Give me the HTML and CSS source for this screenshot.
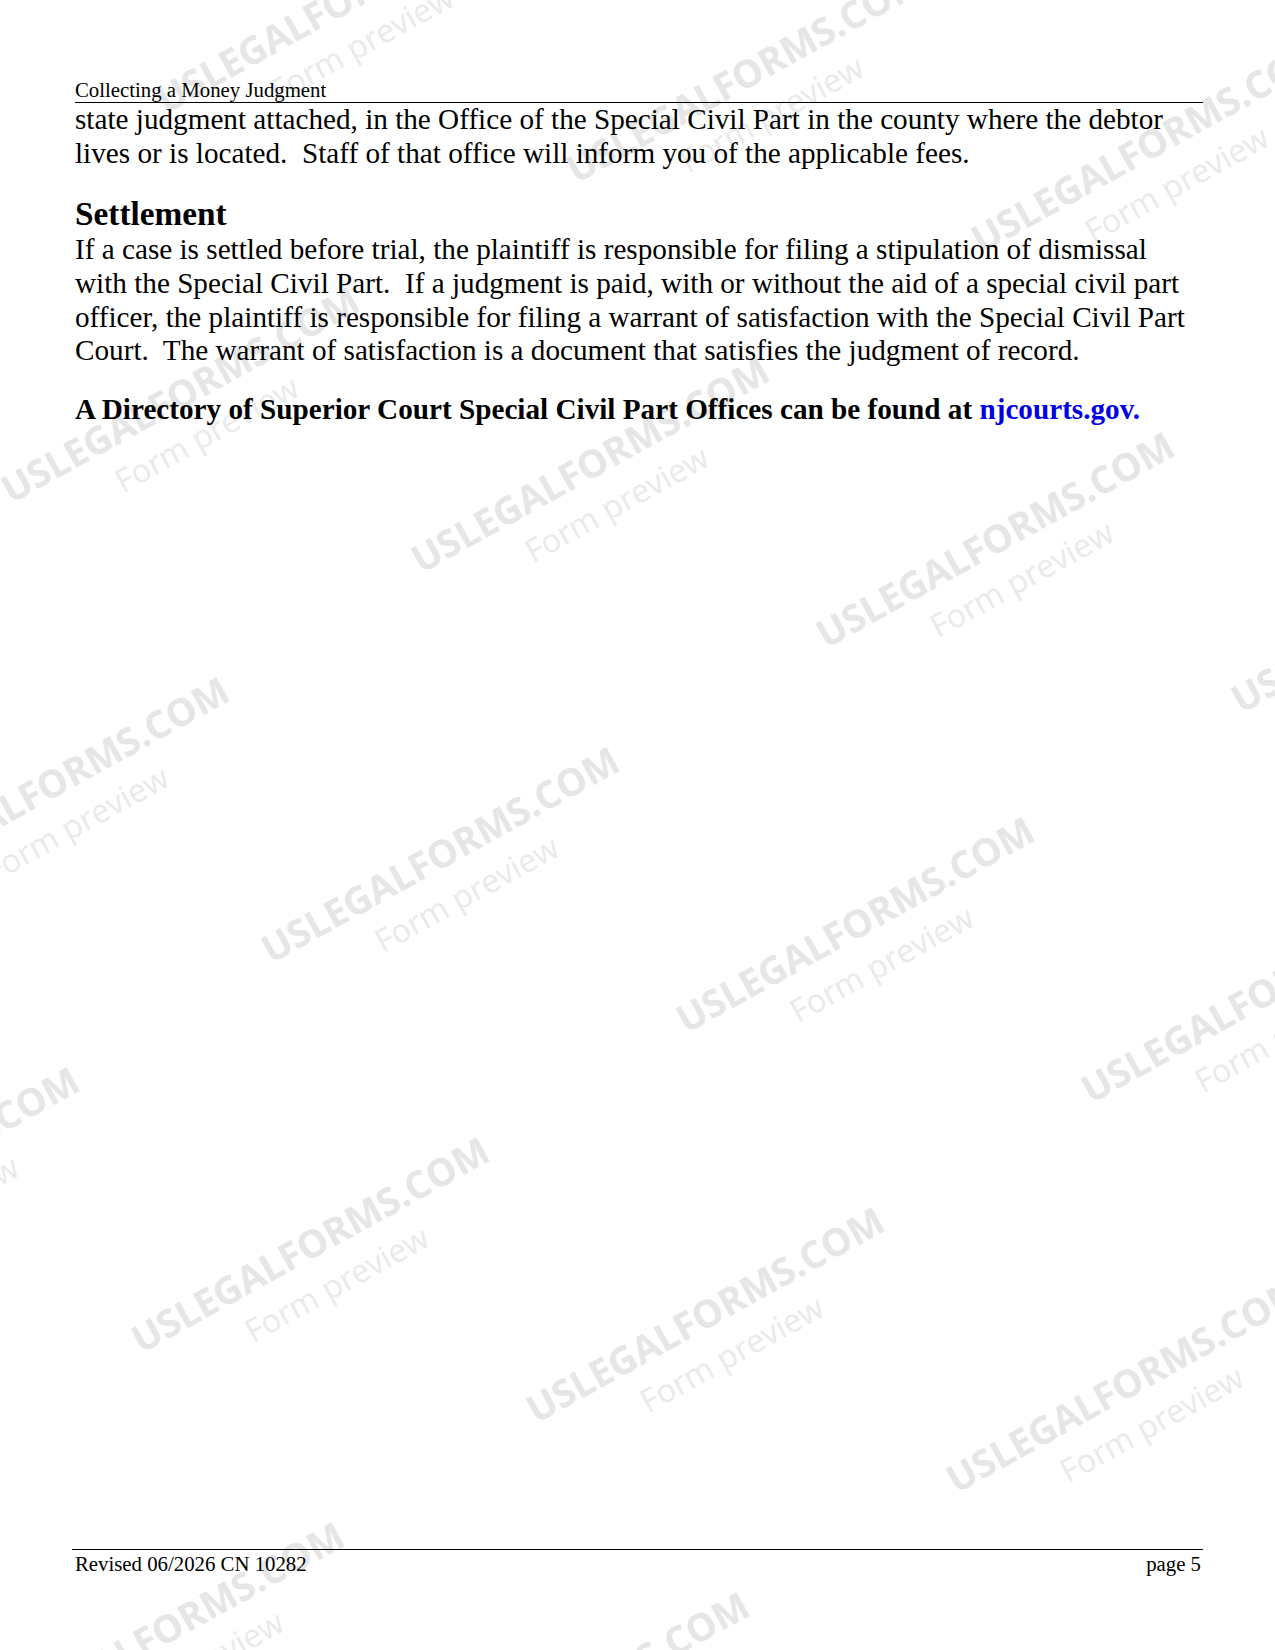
FILE: index.html
```html
<!DOCTYPE html>
<html lang="en">

<head>
    <meta charset="utf-8">
    <meta name="viewport" content="width=device-width, initial-scale=1.0">
    <title>Collecting a Money Judgment - page 5</title>
    <link rel="stylesheet" href="styles.css">
</head>

<body>
    <div class="page">

        <!-- preview watermark, sits behind the text -->
        <div class="watermarks" aria-hidden="true">
            <div class="wm a0"><span class="wm-main">USLEGALFORMS.COM</span><span class="wm-sub">Form preview</span></div>
            <div class="wm a1"><span class="wm-main">USLEGALFORMS.COM</span><span class="wm-sub">Form preview</span></div>
            <div class="wm a2"><span class="wm-main">USLEGALFORMS.COM</span><span class="wm-sub">Form preview</span></div>
            <div class="wm b0"><span class="wm-main">USLEGALFORMS.COM</span><span class="wm-sub">Form preview</span></div>
            <div class="wm b1"><span class="wm-main">USLEGALFORMS.COM</span><span class="wm-sub">Form preview</span></div>
            <div class="wm b2"><span class="wm-main">USLEGALFORMS.COM</span><span class="wm-sub">Form preview</span></div>
            <div class="wm b3"><span class="wm-main">USLEGALFORMS.COM</span><span class="wm-sub">Form preview</span></div>
            <div class="wm c0"><span class="wm-main">USLEGALFORMS.COM</span><span class="wm-sub">Form preview</span></div>
            <div class="wm c1"><span class="wm-main">USLEGALFORMS.COM</span><span class="wm-sub">Form preview</span></div>
            <div class="wm c2"><span class="wm-main">USLEGALFORMS.COM</span><span class="wm-sub">Form preview</span></div>
            <div class="wm c3"><span class="wm-main">USLEGALFORMS.COM</span><span class="wm-sub">Form preview</span></div>
            <div class="wm d0"><span class="wm-main">USLEGALFORMS.COM</span><span class="wm-sub">Form preview</span></div>
            <div class="wm d1"><span class="wm-main">USLEGALFORMS.COM</span><span class="wm-sub">Form preview</span></div>
            <div class="wm d2"><span class="wm-main">USLEGALFORMS.COM</span><span class="wm-sub">Form preview</span></div>
            <div class="wm d3"><span class="wm-main">USLEGALFORMS.COM</span><span class="wm-sub">Form preview</span></div>
            <div class="wm e1"><span class="wm-main">USLEGALFORMS.COM</span><span class="wm-sub">Form preview</span></div>
            <div class="wm e2"><span class="wm-main">USLEGALFORMS.COM</span><span class="wm-sub">Form preview</span></div>
        </div>

        <header class="kopf">Collecting a Money Judgment</header>

        <main class="tekst">
            <p class="afsnit">state judgment attached, in the Office of the Special Civil Part in the county where the debtor<br>lives or is located.&nbsp; Staff of that office will inform you of the applicable fees.</p>

            <h2 class="overskrift">Settlement</h2>
            <p class="afsnit">If a case is settled before trial, the plaintiff is responsible for filing a stipulation of dismissal<br>with the Special Civil Part.&nbsp; If a judgment is paid, with or without the aid of a special civil part<br>officer, the plaintiff is responsible for filing a warrant of satisfaction with the Special Civil Part<br>Court.&nbsp; The warrant of satisfaction is a document that satisfies the judgment of record.</p>

            <p class="afsnit fed">A Directory of Superior Court Special Civil Part Offices can be found at <a href="#">njcourts.gov.</a></p>
        </main>

        <footer class="fod">
            <span>Revised 06/2026 CN 10282</span>
            <span>page 5</span>
        </footer>
    </div>
</body>

</html>
```

FILE: styles.css
```css
body {
    background: white;
    margin: 0;
    padding: 0;
}

.page {
    position: relative;
    width: 1275px;
    height: 1650px;
    box-sizing: border-box;
    padding: 78px 72px 74px 75px;
    display: flex;
    flex-direction: column;
    overflow: hidden;
    font-family: "Liberation Serif", "Times New Roman", serif;
    color: #000000;
}

/* header + footer */

.kopf {
    position: relative;
    z-index: 1;
    font-size: 20.8px;
    line-height: 24px;
    border-bottom: 1.5px solid #000;
}

.fod {
    position: relative;
    z-index: 1;
    margin-top: auto;
    margin-left: -3px;
    padding: 2px 2px 0 3px;
    display: flex;
    justify-content: space-between;
    font-size: 20.8px;
    line-height: 24px;
    border-top: 1.5px solid #000;
}

/* body text */

.tekst {
    position: relative;
    z-index: 1;
}

.afsnit {
    margin: 0 0 25px 0;
    font-size: 29.2px;
    line-height: 33.6px;
    white-space: nowrap;
}

.overskrift {
    margin: 0;
    font-size: 33.3px;
    line-height: 38.3px;
    font-weight: bold;
}

.fed {
    font-weight: bold;
}

.fed a {
    color: #0000e6;
    text-decoration: none;
}

/* watermark */

.watermarks {
    position: absolute;
    top: 0;
    left: 0;
    width: 100%;
    height: 100%;
    z-index: 0;
    pointer-events: none;
}

.wm {
    position: absolute;
    display: flex;
    flex-direction: column;
    align-items: flex-start;
    transform-origin: 0 34px;
    transform: rotate(-29deg);
    font-family: "Open Sans", "Noto Sans", sans-serif;
    white-space: nowrap;
}

.wm-main {
    font-size: 38px;
    line-height: 38px;
    font-weight: bold;
    color: #e6e6e6;
}

.wm-sub {
    margin: 13px 0 0 103px;
    font-size: 32px;
    line-height: 32px;
    color: #eaeaea;
}

.a0 { left: 166px; top: 80px; }
.a1 { left: 576px; top: 150px; }
.a2 { left: 981px; top: 220px; }
.b0 { left: 11px; top: 470px; }
.b1 { left: 421px; top: 540px; }
.b2 { left: 826px; top: 615px; }
.b3 { left: 1241px; top: 680px; }
.c0 { left: -119px; top: 860px; }
.c1 { left: 271px; top: 930px; }
.c2 { left: 686px; top: 1000px; }
.c3 { left: 1091px; top: 1070px; }
.d0 { left: -269px; top: 1250px; }
.d1 { left: 141px; top: 1320px; }
.d2 { left: 536px; top: 1390px; }
.d3 { left: 956px; top: 1460px; }
.e1 { left: -4px; top: 1705px; }
.e2 { left: 401px; top: 1775px; }
```
